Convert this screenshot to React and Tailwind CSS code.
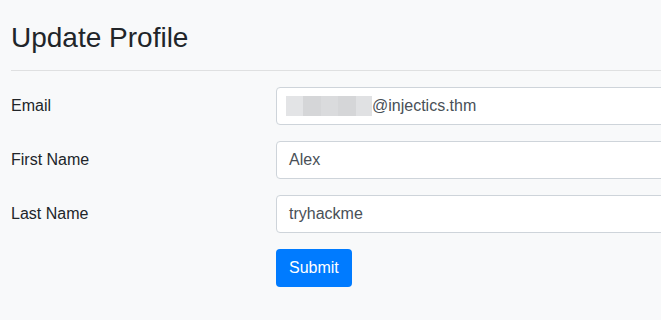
export default function App() {
  const fields = [
    { label: "Email", value: "@injectics.thm", blurred: true },
    { label: "First Name", value: "Alex" },
    { label: "Last Name", value: "tryhackme" },
  ];

  return (
    <div className="min-h-[320px] w-[661px] overflow-hidden bg-[#f8f9fa] font-['Liberation_Sans',Arial,sans-serif] text-[#212529]">
      <div className="w-[900px] pl-[11px] pt-[21px]">
        <h3 className="text-[28px] leading-[1.2] font-normal">Update Profile</h3>
        <hr className="mt-[15px] mb-4 border-t border-[#dfe0e1]" />
        <form className="flex flex-col gap-4">
          {fields.map((f) => (
            <div key={f.label} className="flex items-center">
              <label className="w-[265px] text-base">{f.label}</label>
              <div className="flex h-[38px] w-[560px] items-center rounded border border-[#ced4da] bg-white px-3 text-base text-[#495057]">
                {f.blurred && (
                  <span className="-ml-[3px] flex h-5">
                    <span className="w-[17px] bg-[#e3e4e6]" />
                    <span className="w-[18px] bg-[#d5d6d8]" />
                    <span className="w-[17px] bg-[#dadbdd]" />
                    <span className="w-[18px] bg-[#d5d6d8]" />
                    <span className="w-[16px] bg-[#e0e1e3]" />
                  </span>
                )}
                {f.value}
              </div>
            </div>
          ))}
          <div className="flex">
            <div className="w-[265px]" />
            <button
              type="button"
              className="h-[38px] rounded bg-[#007bff] px-[13px] text-base text-white"
            >
              Submit
            </button>
          </div>
        </form>
      </div>
    </div>
  );
}
